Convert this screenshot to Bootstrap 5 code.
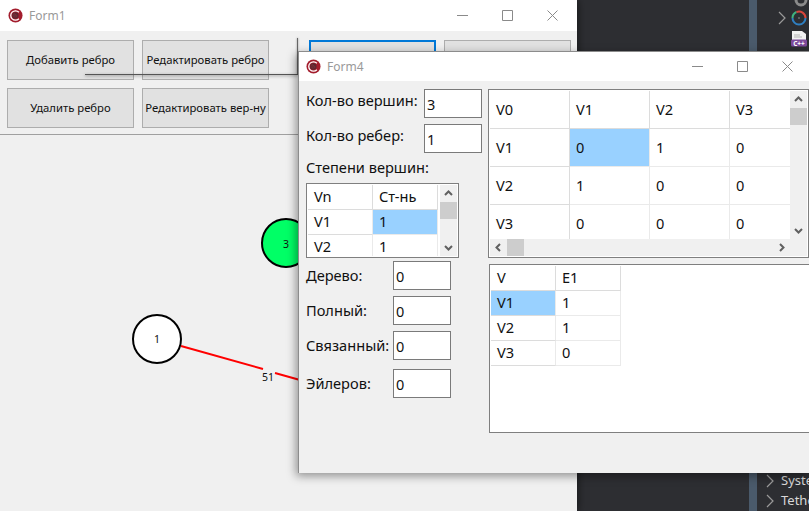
<!DOCTYPE html>
<html lang="ru">
  <head>
    <meta charset="UTF-8" />
    <meta name="viewport" content="width=device-width, initial-scale=1.0" />
    <title>Form4</title>
    <link
      href="https://cdn.jsdelivr.net/npm/bootstrap@5.3.3/dist/css/bootstrap.min.css"
      rel="stylesheet"
    />
    <style>
      html, body {
        width: 809px;
        height: 511px;
        overflow: hidden;
      }
      body {
        position: relative;
        background-color: #2d2e32;
        font-family: "Noto Sans", "Open Sans", sans-serif;
        color: #111;
      }
      /* windows on the desktop */
      .win-main {
        position: absolute;
        left: 0;
        top: 0;
        width: 577px;
        height: 511px;
        background-color: #f0f0f0;
        box-shadow: 1px 0 8px rgba(0, 0, 0, 0.5);
      }
      .win-graph {
        position: absolute;
        left: 298px;
        top: 51px;
        width: 511px;
        height: 422px;
        background-color: #f0f0f0;
        border-left: 1px solid #8c8c8c;
        border-top: 1px solid #8c8c8c;
        box-shadow: -2px 3px 9px rgba(0, 0, 0, 0.4);
      }
      .ide-panel {
        position: absolute;
        left: 577px;
        top: 0;
        width: 232px;
        height: 511px;
        padding-left: 172px;
        color: #d8d8d8;
        font-size: 13px;
      }
      .ide-strip {
        position: absolute;
        left: 172px;
        top: 0;
        width: 8px;
        height: 100%;
        background-color: #4a5a6b;
      }
      .ide-list {
        left: 172px;
        width: 60px;
      }
      .ide-row {
        height: 20px;
        padding-left: 16px;
        gap: 6px;
        white-space: nowrap;
        overflow: hidden;
      }
      .ide-top {
        position: relative;
        height: 51px;
      }
      .ide-gear {
        position: absolute;
        left: 45px;
        top: -7px;
      }
      .ide-chev {
        position: absolute;
        left: 28px;
        top: 11px;
      }
      .ide-ring {
        position: absolute;
        left: 42px;
        top: 10px;
      }
      .ide-file {
        position: absolute;
        left: 42px;
        top: 30px;
      }
      /* title bars */
      .title-bar {
        height: 31px;
        background-color: #fff;
        color: #999;
        font-size: 12px;
        padding-left: 8px;
        gap: 6px;
      }
      .win-graph .title-bar {
        height: 29px;
        padding-left: 7px;
      }
      .win-btns {
        margin-left: auto;
        gap: 34px;
        padding-right: 19px;
      }
      .win-graph .win-btns {
        padding-right: 16px;
      }
      /* Form1 */
      .tool-area {
        height: 104px;
        padding: 9px 0 0 7px;
        border-bottom: 1px solid #a0a0a0;
        display: grid;
        grid-template-columns: 127px 159px 127px 127px;
        grid-auto-rows: 40px;
        column-gap: 8px;
        row-gap: 8px;
      }
      .form-btn {
        width: 127px;
        border: 1px solid #adadad;
        border-radius: 0;
        background-color: #e1e1e1;
        color: #111;
        font-size: 11.3px;
        padding: 0;
        white-space: nowrap;
      }
      .form-btn:hover {
        background-color: #e1e1e1;
      }
      .form-btn-active {
        border: 2px solid #0078d7;
      }
      .graph-canvas {
        display: block;
      }
      .node-label {
        font-family: "Noto Sans", sans-serif;
        font-size: 10.5px;
        fill: #111;
      }
      .drag-line {
        position: absolute;
        left: 85px;
        top: 74px;
        width: 213px;
        height: 1px;
        background-color: #555;
        box-shadow: 0 1px 3px rgba(0, 0, 0, 0.5);
      }
      .drag-edge {
        position: absolute;
        left: 297px;
        top: 38px;
        width: 1px;
        height: 36px;
        background-color: #666;
        box-shadow: 0 0 2px rgba(0, 0, 0, 0.5);
      }
      /* Form4 body */
      .stats-body {
        padding: 8px 0 0 7px;
        gap: 6px;
      }
      .stats-left {
        width: 176px;
        flex: none;
      }
      .stats-right {
        width: 321px;
        flex: none;
        gap: 6px;
      }
      .field-row {
        height: 29px;
        font-size: 14.6px;
        white-space: nowrap;
      }
      .field-row + .field-row {
        margin-top: 6px;
      }
      .field-row.pad-top {
        margin-top: 3px;
      }
      .field-row.pad-ext {
        margin-top: 9px;
      }
      .field-label {
        width: 118px;
        flex: none;
        padding-bottom: 5px;
      }
      .field-short .field-label {
        width: 87px;
        padding-bottom: 0;
      }
      .value-input {
        width: 58px;
        height: 29px;
        flex: none;
        border: 1px solid #7a7a7a;
        border-radius: 0;
        padding: 0 0 0 2px;
        font-size: 14.5px;
        color: #111;
        font-family: inherit;
      }
      .degree-title {
        height: 30px;
        font-size: 14.6px;
      }
      /* grids */
      .grid-box {
        border: 1px solid #7f7f7f;
        background-color: #fff;
        padding: 1px;
        overflow: hidden;
      }
      .grid-degree {
        width: 153px;
        height: 75px;
      }
      .grid-matrix {
        width: 321px;
        height: 169px;
      }
      .grid-incidence {
        width: 321px;
        height: 169px;
        margin-left: 1px;
      }
      .cell-table {
        table-layout: fixed;
        border-collapse: separate;
        border-spacing: 0;
        margin: 0;
        font-size: 14.6px;
        color: #111;
        width: auto;
      }
      .cell-table th,
      .cell-table td {
        font-weight: 400;
        padding: 0 0 0 6px;
        border-right: 1px solid #eaeaea;
        border-bottom: 1px solid #eaeaea;
        vertical-align: middle;
        overflow: hidden;
      }
      .cell-table th {
        border-bottom: 1px solid #dcdcdc;
      }
      .cell-table th.head-col,
      .cell-table thead th {
        border-right: 1px solid #dcdcdc;
      }
      .cell-table td.cell-on,
      .cell-table th.cell-on {
        background-color: #99d1ff;
      }
      .grid-degree .cell-table {
        width: 130px;
      }
      .grid-degree col {
        width: 65px;
      }
      .grid-degree tr {
        height: 25px;
      }
      .grid-matrix .cell-table {
        width: 320px;
      }
      .grid-matrix col {
        width: 80px;
      }
      .grid-matrix tr {
        height: 38px;
      }
      .grid-incidence .cell-table {
        width: 130px;
      }
      .grid-incidence col {
        width: 65px;
      }
      .grid-incidence tr {
        height: 25px;
      }
      .grid-view {
        overflow: hidden;
        min-width: 0;
      }
      /* scrollbars */
      .bar-v {
        width: 17px;
        flex: none;
        background-color: #f0f0f0;
      }
      .bar-h {
        height: 17px;
        flex: none;
        background-color: #f0f0f0;
      }
      .bar-corner {
        width: 17px;
        flex: none;
        background-color: #f0f0f0;
      }
      .bar-thumb-v {
        height: 17px;
        background-color: #cdcdcd;
      }
      .bar-thumb-h {
        width: 17px;
        background-color: #cdcdcd;
      }
      .bar-arrow {
        flex: none;
        width: 17px;
        height: 17px;
      }
    </style>
  </head>
  <body>
    <svg width="0" height="0" class="d-block">
      <symbol id="app-logo" viewBox="0 0 16 16">
        <circle cx="8" cy="8" r="7.5" fill="#a31d2d" />
        <path d="M11.6 4.6A5 5 0 1 0 11.6 11.4" fill="none" stroke="#fff" stroke-width="1.4" />
        <circle cx="7.8" cy="8" r="3.4" fill="#5b2730" />
        <path d="M5.5 6.5l4 3M6 5.5l4 3M5 8l3 2.3" stroke="#8d3540" stroke-width=".6" />
      </symbol>
      <symbol id="win-min" viewBox="0 0 11 11"><path d="M0 5.5h11" stroke="#8a8a8a" /></symbol>
      <symbol id="win-max" viewBox="0 0 11 11"><path d="M.5.5h10v10H.5z" fill="none" stroke="#8a8a8a" /></symbol>
      <symbol id="win-close" viewBox="0 0 11 11"><path d="M.5.5l10 10M10.5.5l-10 10" stroke="#8a8a8a" /></symbol>
      <symbol id="arr-up" viewBox="0 0 17 17"><path d="M5 10l3.5-3.5L12 10" fill="none" stroke="#606060" stroke-width="2" /></symbol>
      <symbol id="arr-down" viewBox="0 0 17 17"><path d="M5 7l3.5 3.5L12 7" fill="none" stroke="#606060" stroke-width="2" /></symbol>
      <symbol id="arr-left" viewBox="0 0 17 17"><path d="M10 5L6.5 8.5 10 12" fill="none" stroke="#606060" stroke-width="2" /></symbol>
      <symbol id="arr-right" viewBox="0 0 17 17"><path d="M7 5l3.5 3.5L7 12" fill="none" stroke="#606060" stroke-width="2" /></symbol>
      <symbol id="tree-chev" viewBox="0 0 10 14"><path d="M2 1l6 6-6 6" fill="none" stroke="#9a9a9a" stroke-width="1.2" /></symbol>
    </svg>

    <!-- IDE behind the forms -->
    <div class="ide-panel">
      <div class="ide-strip"></div>
      <div class="ide-top">
        <svg class="ide-gear" width="14" height="14" viewBox="0 0 14 14"><circle cx="7" cy="7" r="5" fill="none" stroke="#8a8a8a" stroke-width="3" /></svg>
        <svg class="ide-chev" width="10" height="14"><use href="#tree-chev" /></svg>
        <svg class="ide-ring" width="16" height="16" viewBox="0 0 16 16">
          <path d="M1.5 8a6.5 6.5 0 0 1 4-6" fill="none" stroke="#3fb27f" stroke-width="2" />
          <path d="M5.5 2a6.5 6.5 0 0 1 9 6" fill="none" stroke="#d8453c" stroke-width="2" />
          <path d="M14.5 8a6.5 6.5 0 0 1-13 0" fill="none" stroke="#2f7fc1" stroke-width="2" />
          <circle cx="8" cy="8" r=".8" fill="#9a9a9a" />
        </svg>
        <svg class="ide-file" width="16" height="17" viewBox="0 0 16 17">
          <path d="M1 1h10l4 3v6H1z" fill="#f2f2f2" />
          <path d="M3 5h6M3 7h8" stroke="#b5b5b5" />
          <rect y="9.5" width="16" height="7" rx="1.5" fill="#7d4a9c" />
          <text x="8" y="15.5" text-anchor="middle" font-size="6.5" font-weight="700" fill="#fff" font-family="Noto Sans, sans-serif">C++</text>
        </svg>
      </div>
      <div class="position-absolute bottom-0 ide-list">
        <div class="ide-row d-flex align-items-center"><svg width="10" height="14" class="flex-shrink-0"><use href="#tree-chev" /></svg><span>Syste</span></div>
        <div class="ide-row d-flex align-items-center"><svg width="10" height="14" class="flex-shrink-0"><use href="#tree-chev" /></svg><span>Tethe</span></div>
      </div>
    </div>

    <!-- Form1 -->
    <div class="win-main">
      <div class="title-bar d-flex align-items-center">
        <svg width="15" height="15"><use href="#app-logo" /></svg>
        <span>Form1</span>
        <div class="win-btns d-flex align-items-center">
          <svg width="11" height="11"><use href="#win-min" /></svg>
          <svg width="11" height="11"><use href="#win-max" /></svg>
          <svg width="11" height="11"><use href="#win-close" /></svg>
        </div>
      </div>
      <div class="tool-area">
        <button type="button" class="btn form-btn">Добавить ребро</button>
        <button type="button" class="btn form-btn">Редактировать ребро</button>
        <button type="button" class="btn form-btn form-btn-active"></button>
        <button type="button" class="btn form-btn"></button>
        <button type="button" class="btn form-btn">Удалить ребро</button>
        <button type="button" class="btn form-btn">Редактировать вер-ну</button>
      </div>
      <svg class="graph-canvas" width="577" height="376" viewBox="0 135 577 376">
        <line x1="181" y1="346" x2="263" y2="369" stroke="#f00" stroke-width="2" />
        <line x1="275" y1="373" x2="300" y2="380" stroke="#f00" stroke-width="2" />
        <circle cx="157" cy="339" r="24" fill="#fff" stroke="#000" stroke-width="2" />
        <circle cx="286" cy="243" r="24" fill="#00ff66" stroke="#000" stroke-width="2" />
        <text class="node-label" x="157" y="343" text-anchor="middle">1</text>
        <text class="node-label" x="286" y="248" text-anchor="middle">3</text>
        <text class="node-label" x="268" y="381" text-anchor="middle">51</text>
      </svg>
      <div class="drag-line"></div>
      <div class="drag-edge"></div>
    </div>

    <!-- Form4 -->
    <div class="win-graph">
      <div class="title-bar d-flex align-items-center">
        <svg width="15" height="15"><use href="#app-logo" /></svg>
        <span>Form4</span>
        <div class="win-btns d-flex align-items-center">
          <svg width="11" height="11"><use href="#win-min" /></svg>
          <svg width="11" height="11"><use href="#win-max" /></svg>
          <svg width="11" height="11"><use href="#win-close" /></svg>
        </div>
      </div>

      <div class="stats-body d-flex">
        <div class="stats-left">
          <div class="field-row d-flex align-items-center">
            <span class="field-label">Кол-во вершин:</span>
            <input class="value-input" value="3" />
          </div>
          <div class="field-row d-flex align-items-center">
            <span class="field-label">Кол-во ребер:</span>
            <input class="value-input" value="1" />
          </div>
          <div class="degree-title d-flex align-items-center">Степени вершин:</div>

          <div class="grid-box grid-degree d-flex">
            <div class="grid-view">
              <table class="cell-table">
                <colgroup><col /><col /></colgroup>
                <thead>
                  <tr><th>Vn</th><th>Ст-нь</th></tr>
                </thead>
                <tbody>
                  <tr><th>V1</th><td class="cell-on">1</td></tr>
                  <tr><th>V2</th><td>1</td></tr>
                </tbody>
              </table>
            </div>
            <div class="bar-v ms-auto d-flex flex-column">
              <svg class="bar-arrow"><use href="#arr-up" /></svg>
              <div class="bar-thumb-v"></div>
              <svg class="bar-arrow mt-auto"><use href="#arr-down" /></svg>
            </div>
          </div>

          <div class="field-row field-short pad-top d-flex align-items-center">
            <span class="field-label">Дерево:</span>
            <input class="value-input" value="0" />
          </div>
          <div class="field-row field-short d-flex align-items-center">
            <span class="field-label">Полный:</span>
            <input class="value-input" value="0" />
          </div>
          <div class="field-row field-short d-flex align-items-center">
            <span class="field-label">Связанный:</span>
            <input class="value-input" value="0" />
          </div>
          <div class="field-row field-short pad-ext d-flex align-items-center">
            <span class="field-label">Эйлеров:</span>
            <input class="value-input" value="0" />
          </div>
        </div>

        <div class="stats-right d-flex flex-column">
          <div class="grid-box grid-matrix d-flex flex-column">
            <div class="d-flex flex-grow-1 overflow-hidden">
              <div class="grid-view flex-grow-1">
                <table class="cell-table">
                  <colgroup><col /><col /><col /><col /></colgroup>
                  <thead>
                    <tr><th>V0</th><th>V1</th><th>V2</th><th>V3</th></tr>
                  </thead>
                  <tbody>
                    <tr><th class="head-col">V1</th><td class="cell-on">0</td><td>1</td><td>0</td></tr>
                    <tr><th class="head-col">V2</th><td>1</td><td>0</td><td>0</td></tr>
                    <tr><th class="head-col">V3</th><td>0</td><td>0</td><td>0</td></tr>
                  </tbody>
                </table>
              </div>
              <div class="bar-v d-flex flex-column">
                <svg class="bar-arrow"><use href="#arr-up" /></svg>
                <div class="bar-thumb-v"></div>
                <svg class="bar-arrow mt-auto"><use href="#arr-down" /></svg>
              </div>
            </div>
            <div class="d-flex">
              <div class="bar-h flex-grow-1 d-flex">
                <svg class="bar-arrow"><use href="#arr-left" /></svg>
                <div class="bar-thumb-h"></div>
                <svg class="bar-arrow ms-auto"><use href="#arr-right" /></svg>
              </div>
              <div class="bar-corner"></div>
            </div>
          </div>

          <div class="grid-box grid-incidence">
            <table class="cell-table">
              <colgroup><col /><col /></colgroup>
              <thead>
                <tr><th>V</th><th>E1</th></tr>
              </thead>
              <tbody>
                <tr><th class="cell-on">V1</th><td>1</td></tr>
                <tr><th>V2</th><td>1</td></tr>
                <tr><th>V3</th><td>0</td></tr>
              </tbody>
            </table>
          </div>
        </div>
      </div>
    </div>

    <script src="https://cdn.jsdelivr.net/npm/bootstrap@5.3.3/dist/js/bootstrap.bundle.min.js"></script>
  </body>
</html>
